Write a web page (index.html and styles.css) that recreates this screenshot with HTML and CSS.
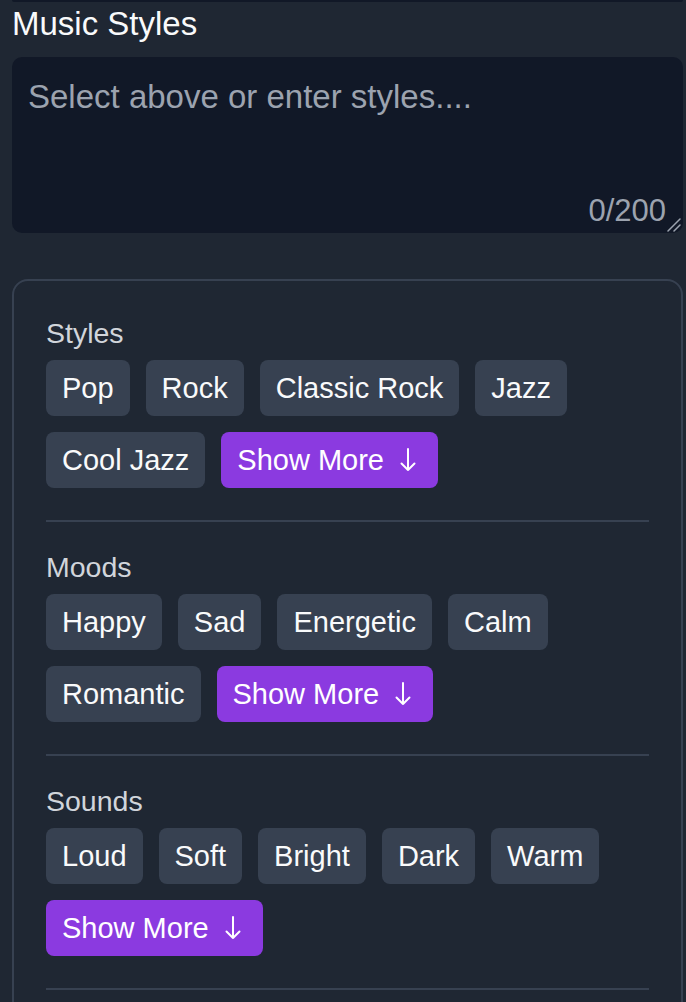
FILE: index.html
```html
<!DOCTYPE html>
<html lang="en">
<head>
<meta charset="utf-8">
<title>Music Styles</title>
<link rel="stylesheet" href="styles.css">
</head>
<body>
<div class="page">
  <div class="prev-edge"></div>
  <h2 class="title">Music Styles</h2>
  <div class="input-wrap">
    <textarea class="styles-input" maxlength="200" placeholder="Select above or enter styles...."></textarea>
    <span class="counter">0/200</span>
    <svg class="resizer" width="14" height="14" viewBox="0 0 14 14" aria-hidden="true">
      <path d="M1 13 L13 1 M7 13 L13 7" stroke="#9ca3af" stroke-width="1.5" stroke-linecap="round" fill="none"/>
    </svg>
  </div>

  <div class="panel">
    <section class="group">
      <h3 class="group-label">Styles</h3>
      <div class="chips">
        <button class="chip">Pop</button>
        <button class="chip">Rock</button>
        <button class="chip">Classic Rock</button>
        <button class="chip">Jazz</button>
        <button class="chip">Cool Jazz</button>
        <button class="chip more">Show More<svg class="arrow" width="16" height="24" viewBox="0 0 16 24" aria-hidden="true"><path d="M8 1 V22 M1.5 15.5 L8 22 L14.5 15.5" stroke="#fff" stroke-width="2" fill="none" stroke-linecap="round" stroke-linejoin="round"/></svg></button>
      </div>
    </section>
    <section class="group">
      <h3 class="group-label">Moods</h3>
      <div class="chips">
        <button class="chip">Happy</button>
        <button class="chip">Sad</button>
        <button class="chip">Energetic</button>
        <button class="chip">Calm</button>
        <button class="chip">Romantic</button>
        <button class="chip more">Show More<svg class="arrow" width="16" height="24" viewBox="0 0 16 24" aria-hidden="true"><path d="M8 1 V22 M1.5 15.5 L8 22 L14.5 15.5" stroke="#fff" stroke-width="2" fill="none" stroke-linecap="round" stroke-linejoin="round"/></svg></button>
      </div>
    </section>
    <section class="group">
      <h3 class="group-label">Sounds</h3>
      <div class="chips">
        <button class="chip">Loud</button>
        <button class="chip">Soft</button>
        <button class="chip">Bright</button>
        <button class="chip">Dark</button>
        <button class="chip">Warm</button>
        <button class="chip more">Show More<svg class="arrow" width="16" height="24" viewBox="0 0 16 24" aria-hidden="true"><path d="M8 1 V22 M1.5 15.5 L8 22 L14.5 15.5" stroke="#fff" stroke-width="2" fill="none" stroke-linecap="round" stroke-linejoin="round"/></svg></button>
      </div>
    </section>
  </div>
</div>
</body>
</html>
```
FILE: styles.css
```css
html, body {
  margin: 0;
  padding: 0;
  background: #1f2733;
  height: 100%;
  overflow: hidden;
}

body {
  font-family: "Liberation Sans", Arial, Helvetica, sans-serif;
  color: #f3f4f6;
}

.page {
  width: 671px;
  padding-left: 12px;
}

.prev-edge {
  height: 2px;
  background: #111827;
  border-radius: 0 0 4px 4px;
}

.title {
  margin: 2px 0 13px;
  font-size: 33px;
  line-height: 40px;
  font-weight: 400;
  color: #f9fafb;
}

.input-wrap {
  position: relative;
}

.styles-input {
  display: block;
  box-sizing: border-box;
  width: 100%;
  height: 176px;
  margin: 0;
  padding: 20px 16px;
  border: none;
  outline: none;
  border-radius: 10px;
  background: #111827;
  color: #f3f4f6;
  font-family: inherit;
  font-size: 33px;
  line-height: 40px;
  resize: none;
}

.styles-input::placeholder {
  color: #9ca3af;
  opacity: 1;
}

.counter {
  position: absolute;
  right: 17px;
  bottom: 4px;
  font-size: 31px;
  line-height: 36px;
  color: #9ca3af;
}

.resizer {
  position: absolute;
  right: 2px;
  bottom: 1px;
}

.panel {
  margin-top: 46px;
  border: 2px solid #374151;
  border-radius: 16px;
  padding: 32px 32px 40px;
}

.group {
  padding-bottom: 32px;
  border-bottom: 2px solid #374151;
}

.group + .group {
  margin-top: 25px;
}

.group-label {
  margin: 0 0 7px;
  font-size: 28.5px;
  line-height: 40px;
  font-weight: 400;
  color: #d1d5db;
}

.chips {
  display: flex;
  flex-wrap: wrap;
  gap: 16px;
}

.chip {
  display: inline-flex;
  align-items: center;
  margin: 0;
  border: none;
  border-radius: 8px;
  padding: 8px 16px;
  background: #374151;
  color: #f9fafb;
  font-family: inherit;
  font-size: 29px;
  line-height: 40px;
  cursor: pointer;
}

.chip.more {
  background: #8b3ae0;
  color: #ffffff;
}

.arrow {
  margin-left: 16px;
  margin-right: 6px;
  flex: none;
}
```
